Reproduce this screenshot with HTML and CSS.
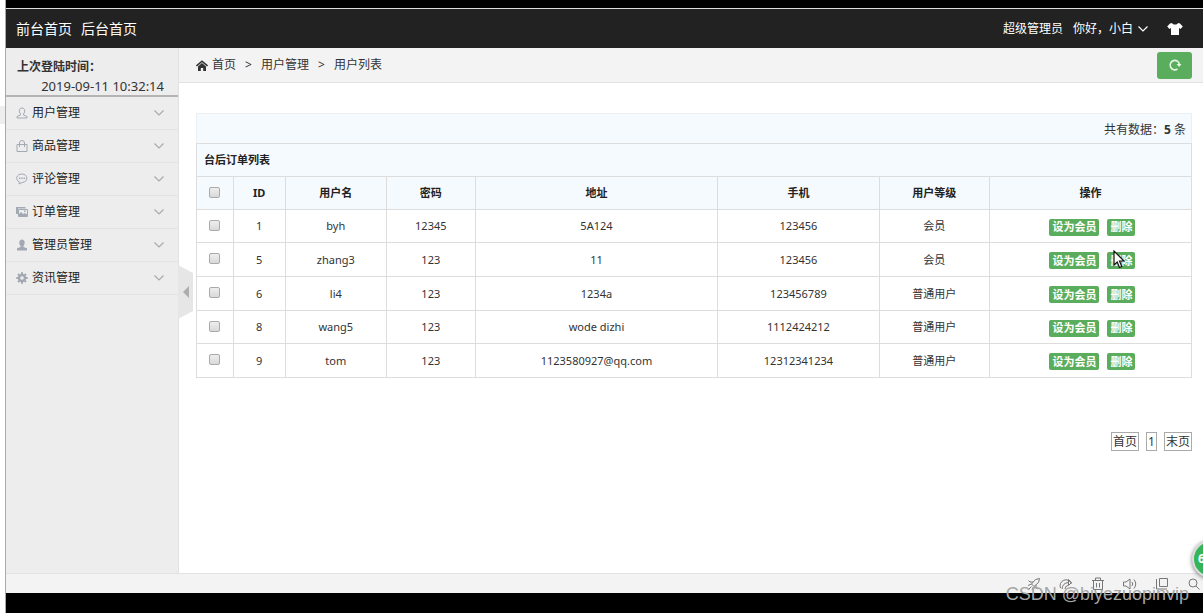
FILE: index.html
```html
<!DOCTYPE html>
<html lang="zh-CN">
<head>
<meta charset="utf-8">
<title>用户列表</title>
<link rel="stylesheet" href="styles.css">
</head>
<body>
<svg class="defs" aria-hidden="true">
  <symbol id="chev" viewBox="0 0 10 10"><path d="M.5 2.500L5 7l4.500-4.500" fill="none" stroke="currentColor" stroke-width="1.200"/></symbol>
</svg>
<div class="edge"><span class="edge-mark"></span></div>
<div class="app">
  <header class="topbar">
    <nav class="top-links"><a href="#">前台首页</a><a href="#">后台首页</a></nav>
    <div class="top-user">
      <span class="role">超级管理员</span>
      <button class="user-menu" type="button"><span>你好<span class="punct">，</span>小白</span><svg class="chev"><use href="#chev"/></svg></button>
      <button class="skin" type="button" aria-label="换肤"><svg width="16" height="12" viewBox="0 0 16 12"><path fill="#fff" d="M5 0c1 2 5 2 6 0l2 .6 2.800 3L13.500 6 12 5v7H4V5L2.500 6 .2 3.600 3 .6z"/></svg></button>
    </div>
  </header>
  <div class="middle">
    <aside class="sidebar">
      <div class="login-time"><strong>上次登陆时间<span class="punct">：</span></strong><time>2019-09-11 10:32:14</time></div>
      <nav class="menu">
        <a href="#"><svg class="ico" viewBox="0 0 12 12"><path fill="none" stroke="currentColor" d="M4.500 7C2.500 4.500 3 1 6 1s3.500 3.500 1.500 6v1l3.500 1.500V11H1V9.500L4.500 8z"/></svg>用户管理<svg class="chev"><use href="#chev"/></svg></a>
        <a href="#"><svg class="ico" viewBox="0 0 12 12"><path fill="none" stroke="currentColor" d="M1 4.500h10v7H1zM3.500 7V3q0-2.500 2.500-2.500T8.500 3v4"/></svg>商品管理<svg class="chev"><use href="#chev"/></svg></a>
        <a href="#"><svg class="ico" viewBox="0 0 12 12"><path fill="none" stroke="currentColor" d="M3 11l.5-2C-1 7 0 1 6 1s7 8 0 8.500z"/><path fill="currentColor" d="M3 4.500h1.400V6H3zM5.300 4.500h1.400V6H5.300zM7.600 4.500H9V6H7.600z"/></svg>评论管理<svg class="chev"><use href="#chev"/></svg></a>
        <a href="#"><svg class="ico" viewBox="0 0 12 12"><path fill="currentColor" d="M0 1h9.500v1.500H2V8H0z"/><path fill="none" stroke="currentColor" d="M2.500 3.500h9v7h-9z"/><path fill="currentColor" d="M3 10V8l2-2 2 2 2-1 2 1.500V10zM8 4.500h1.500V6H8z"/></svg>订单管理<svg class="chev"><use href="#chev"/></svg></a>
        <a href="#"><svg class="ico" viewBox="0 0 12 12"><path fill="currentColor" d="M4.500 7C2.500 4.500 3 .5 6 .5s3.500 4 1.500 6.500v1l3.500 1.300v2.200H1V9.300L4.500 8z"/></svg>管理员管理<svg class="chev"><use href="#chev"/></svg></a>
        <a href="#"><svg class="ico" viewBox="0 0 12 12"><circle cx="6" cy="6" r="3" fill="none" stroke="currentColor" stroke-width="2.400"/><path fill="none" stroke="currentColor" stroke-width="2" d="M6 .3v2M6 9.700v2M.3 6h2M9.700 6h2M2 2l1.400 1.400M8.600 8.600L10 10M2 10l1.400-1.400M8.600 3.400L10 2"/></svg>资讯管理<svg class="chev"><use href="#chev"/></svg></a>
      </nav>
      <button class="collapse" type="button" aria-label="收起侧栏"><svg width="16" height="54" viewBox="0 0 16 54"><path fill="#e6e6e6" d="M0 0l15 8v38L0 54z"/><path fill="#adadad" d="M5 27l6-6v12z"/></svg></button>
    </aside>
    <main class="content">
      <div class="crumbs">
        <svg class="home" viewBox="0 0 12 11"><path fill="none" stroke="#333" stroke-width="1.600" d="M.5 6L6 1.200 11.500 6"/><path fill="#333" d="M2 6.500l4-3.500 4 3.500V11H7.200V8H4.800v3H2z"/></svg>
        <a href="#">首页</a><span class="sep">&gt;</span><a href="#">用户管理</a><span class="sep">&gt;</span><span>用户列表</span>
        <button class="refresh" type="button" aria-label="刷新"><svg width="14" height="14" viewBox="0 0 14 14"><path fill="none" stroke="#e4f5e4" stroke-width="1.600" d="M9.500 11A4.700 4.700 0 1 1 11.500 6.500"/><path fill="#e4f5e4" d="M8.500 6h5l-2.300 3z"/></svg></button>
      </div>
      <div class="panel">
        <div class="count">共有数据<span class="punct">：</span><strong>5</strong> 条</div>
        <table class="list">
          <colgroup><col class="c-check"><col class="c-id"><col class="c-name"><col class="c-pass"><col class="c-addr"><col class="c-phone"><col class="c-level"><col class="c-act"></colgroup>
          <thead>
            <tr><th class="caption" colspan="8">台后订单列表</th></tr>
            <tr><th><input type="checkbox" aria-label="全选"></th><th>ID</th><th>用户名</th><th>密码</th><th>地址</th><th>手机</th><th>用户等级</th><th>操作</th></tr>
          </thead>
          <tbody>
            <tr><td><input type="checkbox" aria-label="选择 1"></td><td>1</td><td>byh</td><td>12345</td><td>5A124</td><td>123456</td><td>会员</td><td><div class="acts"><button type="button">设为会员</button><button type="button">删除</button></div></td></tr>
            <tr><td><input type="checkbox" aria-label="选择 5"></td><td>5</td><td>zhang3</td><td>123</td><td>11</td><td>123456</td><td>会员</td><td><div class="acts"><button type="button">设为会员</button><button type="button">删除</button><svg class="cursor" width="13" height="19" viewBox="0 0 13 19"><path fill="#fff" stroke="#111" stroke-width="1.200" d="M1 1v14l3.200-3 2.300 5.500 2.300-1L6.500 11H11z"/></svg></div></td></tr>
            <tr><td><input type="checkbox" aria-label="选择 6"></td><td>6</td><td>li4</td><td>123</td><td>1234a</td><td>123456789</td><td>普通用户</td><td><div class="acts"><button type="button">设为会员</button><button type="button">删除</button></div></td></tr>
            <tr><td><input type="checkbox" aria-label="选择 8"></td><td>8</td><td>wang5</td><td>123</td><td>wode dizhi</td><td>1112424212</td><td>普通用户</td><td><div class="acts"><button type="button">设为会员</button><button type="button">删除</button></div></td></tr>
            <tr><td><input type="checkbox" aria-label="选择 9"></td><td>9</td><td>tom</td><td>123</td><td>1123580927@qq.com</td><td>12312341234</td><td>普通用户</td><td><div class="acts"><button type="button">设为会员</button><button type="button">删除</button></div></td></tr>
          </tbody>
        </table>
        <nav class="pager"><a href="#">首页</a><a href="#">1</a><a href="#">末页</a></nav>
      </div>
    </main>
  </div>
  <footer class="status">
    <svg viewBox="0 0 14 14"><path d="M12.500 1.500L8.500 2.500 4.500 7l2.500 2.500 4.500-4zM6 5H3L1.500 3.500M4.500 7L1 8.500M9 8v3l1.500 1M7 9.500L5 13M4.500 9.500l-3 3"/></svg>
    <svg viewBox="0 0 14 14"><path d="M1.500 11a5.500 5.500 0 1 1 11-4.500M3 12Q3.500 6 9.500 5.500M9.500 2.500v6l3-3zM6 12q0-3 3-3.500"/></svg>
    <svg viewBox="0 0 14 14"><path d="M1 3.500h12M4.500 3V1h5v2M2.500 3.500v9h9v-9M5.500 6v4.500M8.500 6v4.500"/></svg>
    <svg viewBox="0 0 14 14"><path d="M.5 5v4H3l4 3V2L3 5zM9 5q1.500 2 0 4M11 2.500q3.500 4.500 0 9"/></svg>
    <svg viewBox="0 0 14 14"><path d="M4.500 1.500h8v8h-8zM1.500 2v10H12"/></svg>
    <svg viewBox="0 0 14 14"><circle cx="6" cy="6" r="4"/><path d="M9 9l3.500 3.500"/></svg>
    <span class="watermark">CSDN @biyezuopinvip</span>
    <span class="ball">6</span>
  </footer>
</div>
</body>
</html>
```
FILE: styles.css
```css
* { box-sizing: border-box; }
body {
  margin: 0;
  min-height: 100vh;
  display: flex;
  background: #fff;
  color: #333;
  font: 12px/18px "Noto Sans", "Noto Sans CJK SC", sans-serif;
  overflow: hidden;
}
a { color: inherit; text-decoration: none; }
button { font: inherit; color: inherit; border: 0; padding: 0; background: none; cursor: pointer; }
.punct { font-family: "Noto Sans CJK TC", sans-serif; }
.defs { position: absolute; width: 0; height: 0; }
.edge { width: 6px; flex: none; border-right: 1px solid #aaa; padding-top: 106px; }
.edge-mark { display: block; height: 18px; background: #eee; }
.app {
  flex: 1;
  min-width: 0;
  display: flex;
  flex-direction: column;
  border-top: 8px solid #000;
  border-bottom: 20px solid #000;
}
.topbar {
  height: 40px;
  display: flex;
  justify-content: space-between;
  align-items: center;
  background: #222;
  border-top: 1px solid #ddd;
  color: #fff;
  padding: 0 20px 0 10px;
}
.top-links { display: flex; gap: 9px; font-size: 14px; }
.top-user { display: flex; align-items: center; }
.role { margin-right: 10px; }
.user-menu { display: flex; align-items: center; gap: 5px; }
.chev { width: 10px; height: 10px; }
.skin { display: flex; margin-left: 19px; }
.middle { flex: 1; display: flex; }
.sidebar {
  width: 173px;
  flex: none;
  position: relative;
  background: #ededed;
  border-right: 1px solid #e2e2e2;
}
.login-time {
  height: 49px;
  padding: 9px 14px 0 11px;
  display: flex;
  flex-direction: column;
  border-bottom: 2px solid #b4b4b4;
}
.login-time time { font-size: 13px; line-height: 20px; text-align: right; }
.menu a {
  height: 33px;
  display: flex;
  align-items: center;
  gap: 4px;
  padding: 0 14px 0 10px;
  border-bottom: 1px solid #e3e3e3;
  color: #222;
}
.menu .chev { margin-left: auto; color: #aaa; }
.ico { width: 12px; height: 12px; color: #a3a9b3; }
.collapse { position: absolute; left: 100%; top: 217px; display: flex; }
.content { flex: 1; min-width: 0; }
.crumbs {
  height: 35px;
  display: flex;
  align-items: center;
  padding: 0 11px 0 17px;
  background: #f3f3f3;
  border-bottom: 1px solid #e2e2e2;
}
.home { width: 12px; height: 11px; margin-right: 4px; }
.sep { width: 25px; text-align: center; }
.refresh {
  width: 35px;
  height: 27px;
  margin-left: auto;
  display: flex;
  align-items: center;
  justify-content: center;
  background: #5aad5c;
  border-radius: 3px;
}
.panel { padding: 30px 11px 0 17px; }
.count {
  height: 30px;
  padding: 0 5px;
  line-height: 29px;
  text-align: right;
  background: #f5fafe;
  border: 1px solid #ebeff2;
  border-bottom: 0;
}
.list { width: 100%; table-layout: fixed; border-collapse: collapse; font-size: 11px; line-height: 16px; }
.list th, .list td { border: 1px solid #ddd; padding: 0; text-align: center; }
.list th { background: #f5fafe; color: #222; }
.list thead tr { height: 33px; }
.list tbody tr { height: 34px; }
.list tbody tr:nth-child(3n+1) { height: 33px; }
.list .caption { text-align: left; padding-left: 7px; }
.c-check { width: 3.7%; }
.c-id { width: 5.2%; }
.c-name { width: 10.2%; }
.c-pass { width: 8.9%; }
.c-addr { width: 24.4%; }
.c-phone { width: 16.2%; }
.c-level { width: 11.1%; }
.c-act { width: 20.3%; }
.list input {
  appearance: none;
  display: block;
  width: 11px;
  height: 11px;
  margin: 0 auto 2px;
  border: 1px solid #aaa;
  border-radius: 2px;
  background: linear-gradient(#eee, #d9d9d9);
}
.acts { position: relative; display: flex; justify-content: center; gap: 8px; padding: 2px 0 0 4px; }
.acts button {
  height: 17px;
  padding: 0 3px;
  border-radius: 2px;
  background: #5aad5c;
  color: #fff;
  font-weight: bold;
}
.cursor { position: absolute; left: 61%; top: 0; }
.pager { display: flex; justify-content: flex-end; gap: 7px; margin-top: 54px; }
.pager a { border: 1px solid #aaa; padding: 0 1px; line-height: 17px; }
.status {
  height: 20px;
  position: relative;
  display: flex;
  align-items: center;
  justify-content: flex-end;
  gap: 18px;
  padding-right: 2px;
  background: #f3f3f3;
  border-top: 1px solid #e2e2e2;
}
.status svg { width: 14px; height: 14px; fill: none; stroke: #777; }
.watermark {
  position: absolute;
  right: 14px;
  top: 10px;
  font: 18px/20px "Liberation Sans", sans-serif;
  color: #a6a6a6;
}
.ball {
  position: absolute;
  right: -27px;
  bottom: 15px;
  width: 38px;
  height: 38px;
  padding-left: 4px;
  border: 2px solid #ddd;
  border-radius: 50%;
  background: #35b558;
  box-shadow: 0 1px 4px #777;
  color: #fff;
  font-weight: bold;
  line-height: 34px;
}
```
